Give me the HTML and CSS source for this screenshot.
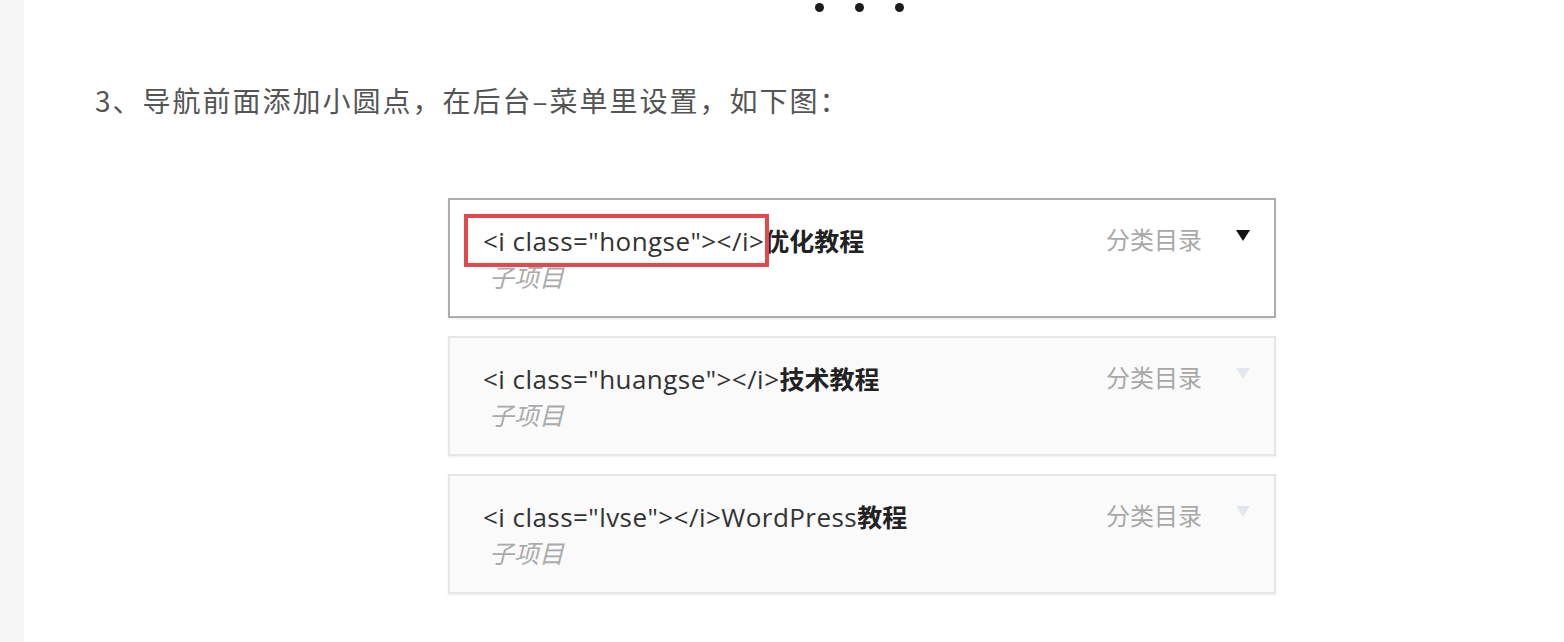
FILE: index.html
```html
<!DOCTYPE html>
<html lang="zh-CN">
<head>
<meta charset="utf-8">
<title>导航小圆点</title>
<link rel="stylesheet" href="styles.css">
</head>
<body>
<div class="page">
  <aside class="side"></aside>
  <main class="main">
    <div class="dots"><span class="dot"></span><span class="dot"></span><span class="dot"></span></div>
    <p class="para">3、导航前面添加小圆点，在后台–菜单里设置，如下图：</p>
    <div class="menu">
      <div class="item active">
        <div class="item-text">
          <div class="title"><span class="code marked">&lt;i class="hongse"&gt;&lt;/i&gt;</span><b class="name">优化教程</b></div>
          <div class="sub">子项目</div>
        </div>
        <div class="item-meta"><span class="kind">分类目录</span><span class="arrow"></span></div>
      </div>
      <div class="item">
        <div class="item-text">
          <div class="title"><span class="code">&lt;i class="huangse"&gt;&lt;/i&gt;</span><b class="name">技术教程</b></div>
          <div class="sub">子项目</div>
        </div>
        <div class="item-meta"><span class="kind">分类目录</span><span class="arrow"></span></div>
      </div>
      <div class="item">
        <div class="item-text">
          <div class="title"><span class="code">&lt;i class="lvse"&gt;&lt;/i&gt;WordPress</span><b class="name">教程</b></div>
          <div class="sub">子项目</div>
        </div>
        <div class="item-meta"><span class="kind">分类目录</span><span class="arrow"></span></div>
      </div>
    </div>
  </main>
</div>
</body>
</html>
```
FILE: styles.css
```css
html, body {
  margin: 0;
  padding: 0;
  background: #ffffff;
}
body {
  font-family: "Noto Sans", "Noto Sans CJK SC", sans-serif;
}
.page {
  display: flex;
  min-height: 642px;
}
.side {
  width: 24px;
  flex: none;
  background: #f5f5f5;
}
.main {
  flex: 1;
  padding-left: 71px;
}
.dots {
  display: flex;
  gap: 31px;
  margin-left: 720px;
  padding-top: 3px;
  height: 9px;
}
.dot {
  width: 9px;
  height: 9px;
  border-radius: 50%;
  background: #1c1c1c;
}
.para {
  margin: 68px 0 0 0;
  font-family: "Noto Sans CJK SC", sans-serif;
  font-size: 28px;
  line-height: 40px;
  letter-spacing: 2px;
  color: #555555;
}
.menu {
  margin: 78px 0 0 353px;
  width: 828px;
  display: flex;
  flex-direction: column;
  gap: 18px;
}
.item {
  box-sizing: border-box;
  height: 120px;
  display: flex;
  justify-content: space-between;
  align-items: flex-start;
  padding: 24px 24px 0 33px;
  background: #fafafa;
  border: 2px solid #e6e6e6;
  box-shadow: 0 1px 2px rgba(0, 0, 0, 0.08);
}
.item.active {
  background: #ffffff;
  border-color: #adadad;
}
.title {
  font-size: 26px;
  line-height: 32px;
  color: #333333;
  white-space: nowrap;
}
.code {
  font-family: "Open Sans", sans-serif;
  letter-spacing: 0.45px;
}
.marked {
  position: relative;
}
.marked::after {
  content: "";
  position: absolute;
  left: -19px;
  right: -5px;
  top: -9px;
  bottom: -8px;
  border: 4px solid #e5484a;
}
.name {
  font-family: "Noto Sans CJK SC", sans-serif;
  font-weight: 700;
  font-size: 25px;
  color: #222222;
}
.sub {
  margin: 4px 0 0 6px;
  font-family: "Noto Sans CJK SC", sans-serif;
  font-size: 25px;
  line-height: 30px;
  font-style: italic;
  color: #ababab;
}
.item-meta {
  display: flex;
  align-items: center;
  gap: 34px;
  height: 32px;
  margin-top: -2px;
}
.kind {
  font-family: "Noto Sans CJK SC", sans-serif;
  font-size: 24px;
  color: #a8a8a8;
}
.arrow {
  width: 0;
  height: 0;
  border-left: 7px solid transparent;
  border-right: 7px solid transparent;
  border-top: 11px solid #e3e6ee;
  margin-top: -6px;
}
.active .arrow {
  border-top-color: #111111;
}
```
